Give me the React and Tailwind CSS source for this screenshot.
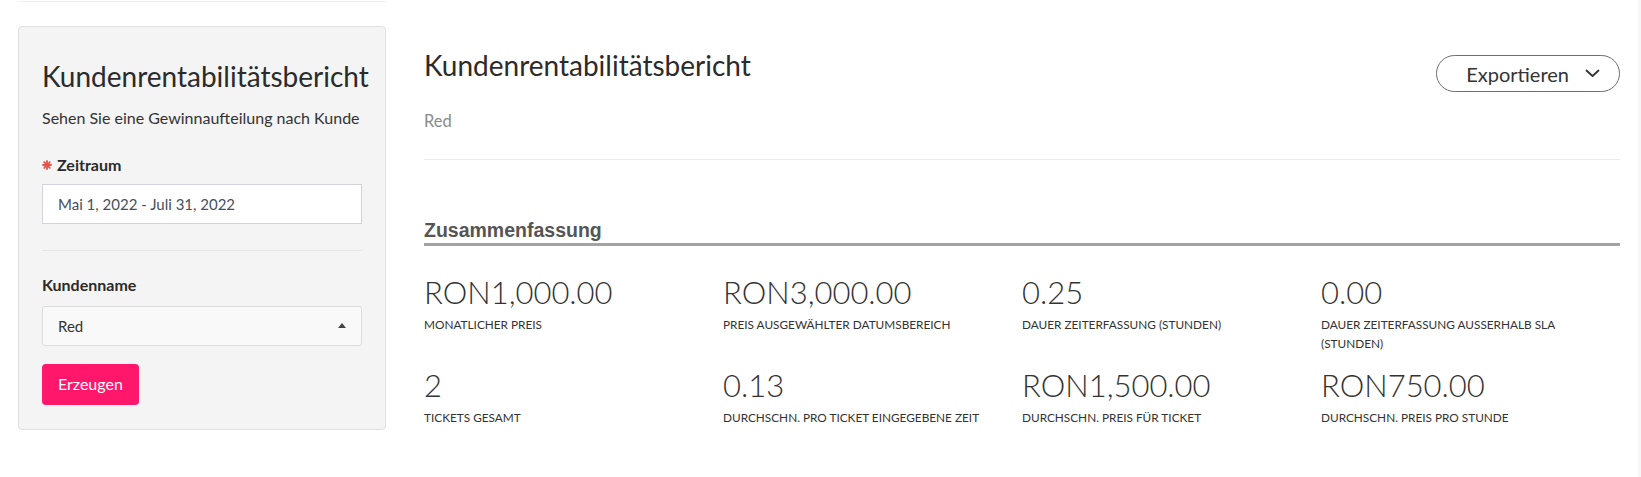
import React from "react";

const stats = [
  ["RON1,000.00", "MONATLICHER PREIS"],
  ["RON3,000.00", "PREIS AUSGEWÄHLTER DATUMSBEREICH"],
  ["0.25", "DAUER ZEITERFASSUNG (STUNDEN)"],
  ["0.00", "DAUER ZEITERFASSUNG AUSSERHALB SLA (STUNDEN)"],
  ["2", "TICKETS GESAMT"],
  ["0.13", "DURCHSCHN. PRO TICKET EINGEGEBENE ZEIT"],
  ["RON1,500.00", "DURCHSCHN. PREIS FÜR TICKET"],
  ["RON750.00", "DURCHSCHN. PREIS PRO STUNDE"],
];

function Asterisk() {
  return (
    <svg width="10" height="10" viewBox="0 0 10 10" className="mr-[5px] shrink-0">
      <g stroke="#e5534b" strokeWidth="1.8" strokeLinecap="round">
        <line x1="5" y1="1" x2="5" y2="9" />
        <line x1="1" y1="5" x2="9" y2="5" />
        <line x1="2.2" y1="2.2" x2="7.8" y2="7.8" />
        <line x1="7.8" y1="2.2" x2="2.2" y2="7.8" />
      </g>
    </svg>
  );
}

export default function App() {
  return (
    <div className="flex min-h-[477px] bg-white text-[#333] font-['Lato',sans-serif]">
      <aside className="ml-[18px] w-[368px] shrink-0">
        <div className="h-[2px] border-b border-[#f0f0f0]" />
        <div className="mt-[24px] rounded-[4px] border border-[#e0e0e0] bg-[#f4f4f4] px-[23px] pt-[33px] pb-[24px]">
          <h1 className="text-[28px] leading-[1.2] font-normal text-[#2b2b2b]">Kundenrentabilitätsbericht</h1>
          <p className="mt-[14px] text-[16px] leading-[1.2] text-[#333]">Sehen Sie eine Gewinnaufteilung nach Kunde</p>
          <div className="mt-[29px] flex items-center text-[16px] leading-[18px] font-bold text-[#2b2b2b]">
            <Asterisk />
            Zeitraum
          </div>
          <div className="mt-[10px] flex h-[40px] items-center border border-[#d3d3de] bg-white pl-[15px] text-[15px] text-[#46505e]">
            Mai 1, 2022 - Juli 31, 2022
          </div>
          <div className="mt-[26px] h-px bg-[#e6e6e6]" />
          <div className="mt-[25px] text-[16px] leading-[18px] font-bold text-[#2b2b2b]">Kundenname</div>
          <div className="mt-[12px] flex h-[40px] items-center justify-between rounded-[3px] border border-[#dcdcdc] bg-[#f9f9f9] pl-[15px] pr-[15px] text-[15px] text-[#333]">
            <span>Red</span>
            <span className="h-0 w-0 border-x-[4.5px] border-b-[5px] border-x-transparent border-b-[#444]" />
          </div>
          <button className="mt-[18px] flex h-[41px] items-center rounded-[4px] bg-[#ff176b] px-[16px] text-[16px] text-white">
            Erzeugen
          </button>
        </div>
      </aside>

      <main className="ml-[38px] mr-[18px] flex-1">
        <div className="flex items-start justify-between">
          <div className="pt-[49px]">
            <h2 className="text-[28px] leading-[1.2] font-normal text-[#2b2b2b]">Kundenrentabilitätsbericht</h2>
            <div className="mt-[29px] text-[16.5px] leading-[1.2] text-[#8a8a8a]">Red</div>
          </div>
          <button className="mt-[55px] flex h-[37px] w-[184px] items-center justify-end gap-[16px] rounded-full border border-[#6e6e6e] pr-[19px] text-[20px] text-[#333]">
            <span>Exportieren</span>
            <svg width="15" height="9" viewBox="0 0 15 9">
              <polyline points="1.5,1.5 7.5,7 13.5,1.5" fill="none" stroke="#333" strokeWidth="1.8" strokeLinecap="round" strokeLinejoin="round" />
            </svg>
          </button>
        </div>
        <div className="mt-[28px] h-px bg-[#ececec]" />
        <h3 className="mt-[60px] border-b-[3px] border-[#a3a3a3] pb-[3px] font-['Liberation_Sans',Arial,sans-serif] text-[19.5px] leading-[20px] font-bold text-[#555]">
          Zusammenfassung
        </h3>
        <div className="mt-[25px] grid grid-cols-4 gap-y-[11px]">
          {stats.map(([v, l]) => (
            <div key={l} className="pr-[30px]">
              <div className="text-[31px] leading-[42px] font-light text-[#333]">{v}</div>
              <div className="mt-[3px] text-[11.8px] leading-[18.5px] text-[#333]">{l}</div>
            </div>
          ))}
        </div>
      </main>
      <div className="w-[3px] shrink-0 bg-[#f7f7f7]" />
    </div>
  );
}
